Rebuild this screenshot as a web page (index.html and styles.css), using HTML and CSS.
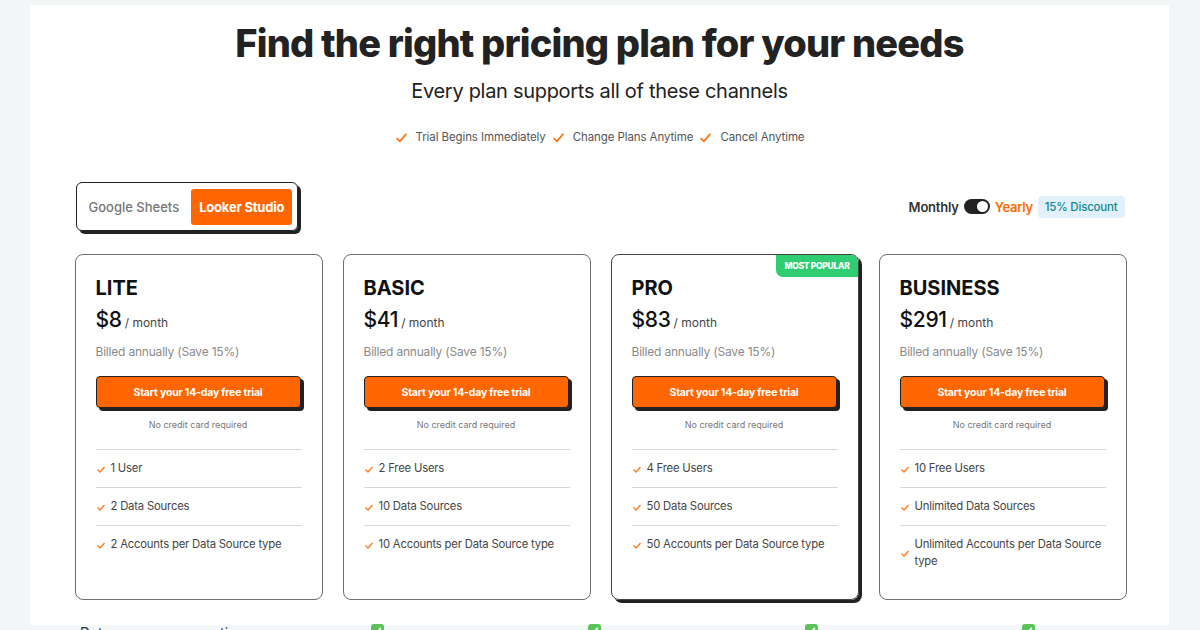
FILE: index.html
```html
<!DOCTYPE html>
<html>
<head>
<meta charset="utf-8">
<link rel="stylesheet" href="styles.css">
</head>
<body>
<div class="panel">
  <h1 class="title">Find the right pricing plan for your needs</h1>
  <p class="subtitle">Every plan supports all of these channels</p>
  <div class="perks">
    <span class="perk"><svg class="pk" viewBox="0 0 12 12"><path d="M1.5 6.5 L4.5 9.5 L10.5 2.5"/></svg>Trial Begins Immediately</span>
    <span class="perk"><svg class="pk" viewBox="0 0 12 12"><path d="M1.5 6.5 L4.5 9.5 L10.5 2.5"/></svg>Change Plans Anytime</span>
    <span class="perk"><svg class="pk" viewBox="0 0 12 12"><path d="M1.5 6.5 L4.5 9.5 L10.5 2.5"/></svg>Cancel Anytime</span>
  </div>

  <div class="controls">
    <div class="tabs">
      <span class="tab">Google Sheets</span>
      <span class="tab active">Looker Studio</span>
    </div>
    <div class="billing">
      <span class="monthly">Monthly</span>
      <span class="switch"><span class="knob"></span></span>
      <span class="yearly">Yearly</span>
      <span class="discount">15% Discount</span>
    </div>
  </div>

  <div class="cards">
    <div class="card">
      <h2 class="plan">LITE</h2>
      <div class="price"><span class="amt">$8</span><span class="per">/ month</span></div>
      <div class="billed">Billed annually (Save 15%)</div>
      <button class="cta">Start your 14-day free trial</button>
      <div class="nocc">No credit card required</div>
      <ul class="features">
        <li><svg class="fk" viewBox="0 0 10 10"><path d="M1.5 5.5 L4 8 L8.5 3"/></svg><span>1 User</span></li>
        <li><svg class="fk" viewBox="0 0 10 10"><path d="M1.5 5.5 L4 8 L8.5 3"/></svg><span>2 Data Sources</span></li>
        <li><svg class="fk" viewBox="0 0 10 10"><path d="M1.5 5.5 L4 8 L8.5 3"/></svg><span>2 Accounts per Data Source type</span></li>
      </ul>
    </div>
    <div class="card">
      <h2 class="plan">BASIC</h2>
      <div class="price"><span class="amt">$41</span><span class="per">/ month</span></div>
      <div class="billed">Billed annually (Save 15%)</div>
      <button class="cta">Start your 14-day free trial</button>
      <div class="nocc">No credit card required</div>
      <ul class="features">
        <li><svg class="fk" viewBox="0 0 10 10"><path d="M1.5 5.5 L4 8 L8.5 3"/></svg><span>2 Free Users</span></li>
        <li><svg class="fk" viewBox="0 0 10 10"><path d="M1.5 5.5 L4 8 L8.5 3"/></svg><span>10 Data Sources</span></li>
        <li><svg class="fk" viewBox="0 0 10 10"><path d="M1.5 5.5 L4 8 L8.5 3"/></svg><span>10 Accounts per Data Source type</span></li>
      </ul>
    </div>
    <div class="card popular">
      <span class="badge">MOST POPULAR</span>
      <h2 class="plan">PRO</h2>
      <div class="price"><span class="amt">$83</span><span class="per">/ month</span></div>
      <div class="billed">Billed annually (Save 15%)</div>
      <button class="cta">Start your 14-day free trial</button>
      <div class="nocc">No credit card required</div>
      <ul class="features">
        <li><svg class="fk" viewBox="0 0 10 10"><path d="M1.5 5.5 L4 8 L8.5 3"/></svg><span>4 Free Users</span></li>
        <li><svg class="fk" viewBox="0 0 10 10"><path d="M1.5 5.5 L4 8 L8.5 3"/></svg><span>50 Data Sources</span></li>
        <li><svg class="fk" viewBox="0 0 10 10"><path d="M1.5 5.5 L4 8 L8.5 3"/></svg><span>50 Accounts per Data Source type</span></li>
      </ul>
    </div>
    <div class="card">
      <h2 class="plan">BUSINESS</h2>
      <div class="price"><span class="amt">$291</span><span class="per">/ month</span></div>
      <div class="billed">Billed annually (Save 15%)</div>
      <button class="cta">Start your 14-day free trial</button>
      <div class="nocc">No credit card required</div>
      <ul class="features">
        <li><svg class="fk" viewBox="0 0 10 10"><path d="M1.5 5.5 L4 8 L8.5 3"/></svg><span>10 Free Users</span></li>
        <li><svg class="fk" viewBox="0 0 10 10"><path d="M1.5 5.5 L4 8 L8.5 3"/></svg><span>Unlimited Data Sources</span></li>
        <li><svg class="fk" viewBox="0 0 10 10"><path d="M1.5 5.5 L4 8 L8.5 3"/></svg><span>Unlimited Accounts per Data Source type</span></li>
      </ul>
    </div>
  </div>
</div>

<div class="compare">
  <div class="crow">
    <span class="clabel">Data sources connections</span>
    <span class="gc"><svg viewBox="0 0 12 12"><path d="M3 6.5 L5 8.5 L9 3.5"/></svg></span>
    <span class="gc"><svg viewBox="0 0 12 12"><path d="M3 6.5 L5 8.5 L9 3.5"/></svg></span>
    <span class="gc"><svg viewBox="0 0 12 12"><path d="M3 6.5 L5 8.5 L9 3.5"/></svg></span>
    <span class="gc"><svg viewBox="0 0 12 12"><path d="M3 6.5 L5 8.5 L9 3.5"/></svg></span>
  </div>
</div>
</body>
</html>
```

FILE: styles.css
```css
* { box-sizing: border-box; }
html, body { margin: 0; padding: 0; }
body {
  background: #f3f6f6;
  font-family: "Inter", "Noto Sans", sans-serif;
  color: #222;
  overflow: hidden;
  height: 630px;
}
.panel {
  background: #fff;
  margin: 5px 31px 0 30px;
  padding: 15px 0 25px;
  display: flex;
  flex-direction: column;
  align-items: center;
}
.title {
  margin: 0;
  font-size: 38px;
  line-height: 46px;
  font-weight: 800;
  letter-spacing: -0.8px;
  color: #222;
}
.subtitle {
  margin: 11px 0 0;
  font-size: 20px;
  line-height: 28px;
  font-weight: 400;
  letter-spacing: -0.3px;
  color: #222;
}
.perks {
  margin-top: 23px;
  display: flex;
  gap: 6px;
  font-size: 11.5px;
  line-height: 18px;
  color: #555;
  letter-spacing: -0.1px;
}
.perk { display: flex; align-items: center; gap: 8px; }
.pk { width: 13px; height: 13px; fill: none; stroke: #ff6a00; stroke-width: 1.5; }

.controls {
  margin-top: 36px;
  width: 1050px;
  display: flex;
  justify-content: space-between;
  align-items: center;
  padding-left: 1px;
}
.tabs {
  display: flex;
  align-items: center;
  gap: 12px;
  height: 49px;
  padding: 0 5px 0 12px;
  border: 1.5px solid #222;
  border-radius: 6px;
  box-shadow: 3px 3px 0 #222;
}
.tab {
  font-size: 13px;
  font-weight: 500;
  color: #777;
}
.tab.active {
  background: #ff6600;
  color: #fff;
  font-weight: 700;
  border-radius: 3px;
  padding: 10px 8px;
  letter-spacing: -0.2px;
}
.billing {
  display: flex;
  align-items: center;
  gap: 5px;
  font-size: 13px;
  font-weight: 600;
}
.monthly { color: #333; letter-spacing: -0.2px; }
.yearly { color: #ff6a00; letter-spacing: -0.3px; }
.switch {
  width: 26px;
  height: 15px;
  background: #222;
  border-radius: 8px;
  display: flex;
  align-items: center;
  justify-content: flex-end;
  padding: 2px;
}
.knob { width: 11px; height: 11px; border-radius: 50%; background: #fff; }
.discount {
  background: #e1f1fb;
  color: #14868f;
  font-weight: 500;
  font-size: 11.5px;
  border-radius: 4px;
  padding: 3px 7px;
  line-height: 16px;
  letter-spacing: -0.2px;
}

.cards {
  margin-top: 23px;
  width: 1050px;
  display: grid;
  grid-template-columns: repeat(4, 1fr);
  gap: 20px;
}
.card {
  position: relative;
  height: 346px;
  border: 1px solid #6e6e6e;
  border-radius: 8px;
  padding: 21px 20px 0;
}
.card.popular {
  border-color: #444;
  box-shadow: 3px 3px 0 #222;
}
.badge {
  position: absolute;
  top: 0;
  right: 0;
  background: #2fcc71;
  color: #fff;
  font-size: 8.5px;
  font-weight: 800;
  letter-spacing: -0.3px;
  padding: 6px 8px 5px;
  line-height: 11px;
  border-radius: 0 7px 0 7px;
}
.plan {
  margin: 0;
  font-size: 20px;
  line-height: 24px;
  font-weight: 700;
  color: #111;
}
.price {
  margin-top: 6px;
  display: flex;
  align-items: baseline;
  gap: 3px;
  line-height: 28px;
}
.amt { font-size: 21px; font-weight: 500; color: #111; letter-spacing: -0.3px; }
.per { font-size: 12px; color: #444; }
.billed {
  margin-top: 7px;
  font-size: 12px;
  line-height: 16px;
  color: #8a8a8a;
  letter-spacing: -0.2px;
}
.cta {
  display: block;
  margin-top: 16px;
  width: 205px;
  height: 32px;
  background: #ff6600;
  color: #fff;
  border: 1px solid #222;
  border-radius: 4px;
  box-shadow: 3px 3px 0 #222;
  font-family: "Inter", sans-serif;
  font-size: 10.5px;
  font-weight: 700;
  letter-spacing: -0.2px;
  padding: 0;
}
.nocc {
  margin-top: 11px;
  width: 205px;
  text-align: center;
  font-size: 9px;
  line-height: 12px;
  color: #777;
}
.features {
  list-style: none;
  margin: 18px 0 0;
  padding: 0;
  width: 206px;
}
.features li {
  display: flex;
  align-items: center;
  gap: 5px;
  min-height: 38px;
  border-top: 1px solid #d8d8d8;
  font-size: 11.3px;
  line-height: 17px;
  color: #444;
  padding: 10px 0 10px;
  letter-spacing: -0.2px;
}
.fk {
  flex: none;
  width: 10px;
  height: 10px;
  fill: none;
  stroke: #ff7a1a;
  stroke-width: 1.3;
}

.compare {
  padding: 0 0 0 80px;
}
.crow {
  height: 20px;
  display: grid;
  grid-template-columns: 291px 217px 217px 217px 30px;
  align-items: start;
}
.clabel {
  font-size: 14px;
  line-height: 20px;
  color: #333;
  margin-top: -2px;
}
.gc {
  width: 13px;
  height: 13px;
  background: #5cc25a;
  border-radius: 3px;
  margin-top: -1px;
  display: flex;
}
.gc svg { width: 13px; height: 13px; fill: none; stroke: #fff; stroke-width: 1.6; }
```
